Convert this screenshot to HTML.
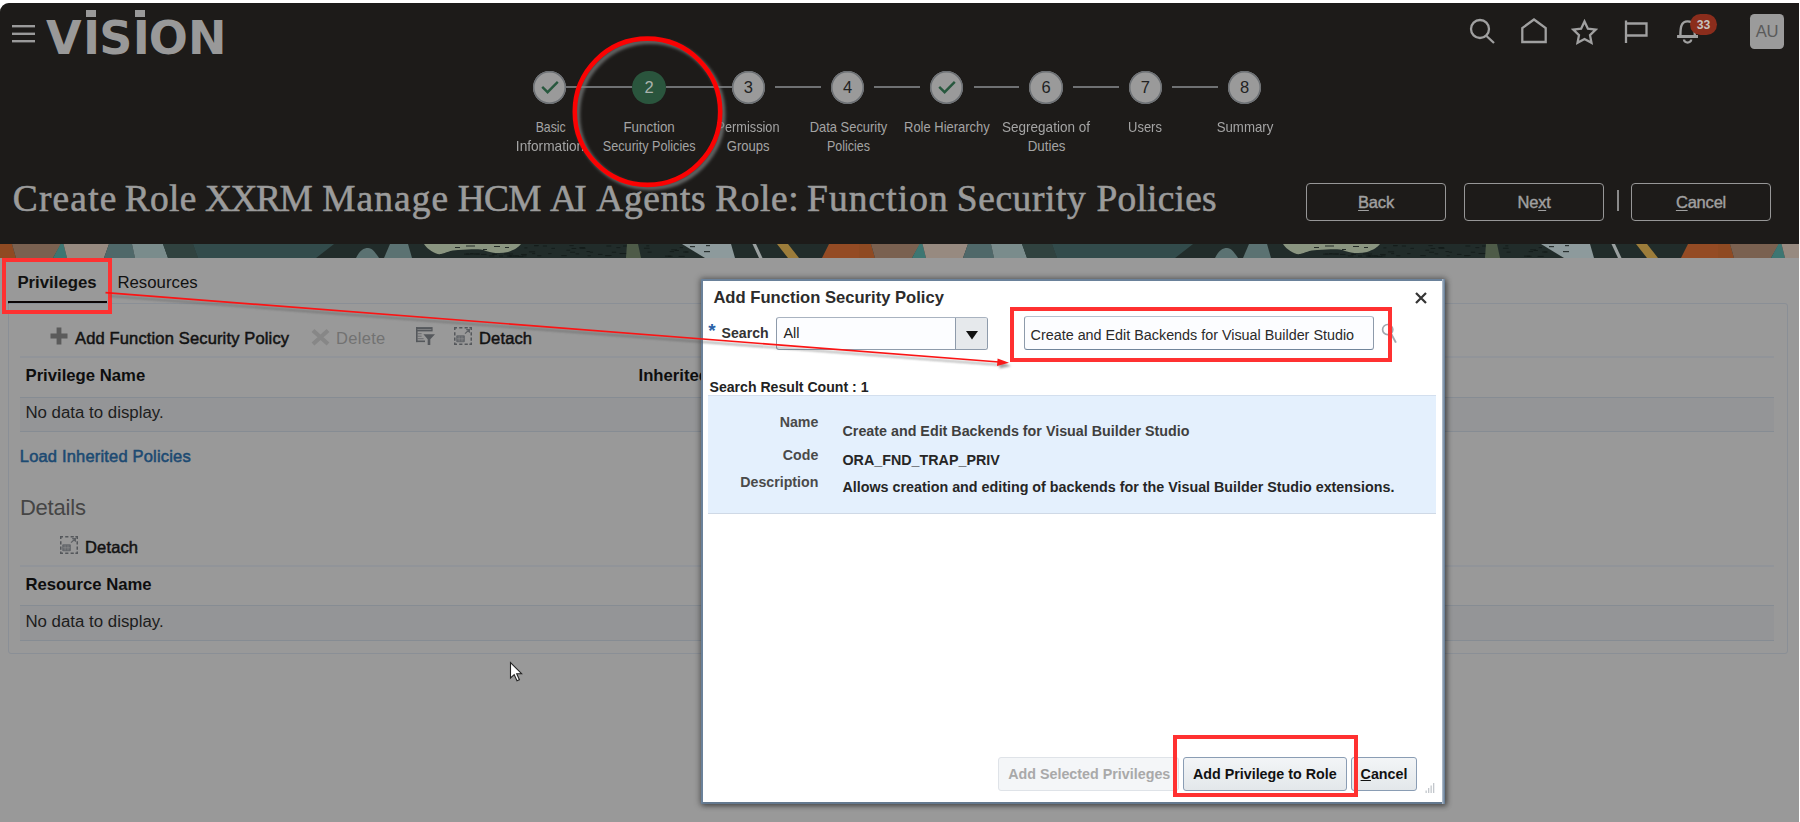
<!DOCTYPE html>
<html lang="en">
<head>
<meta charset="utf-8">
<title>Create Role: Function Security Policies</title>
<style>
*{box-sizing:border-box;margin:0;padding:0}
html,body{width:1800px;height:822px;overflow:hidden;background:#fff}
body{font-family:"Liberation Sans",Arial,sans-serif;color:#111;position:relative}
.abs{position:absolute}
.nw{white-space:nowrap}
#page{position:absolute;left:0;top:3px;width:1799px;height:819px;background:#999;border-top-left-radius:9px;overflow:hidden}
#hdr{position:absolute;left:0;top:0;width:1799px;height:241px;background:#1d1b19}
#band{position:absolute;left:0;top:241px;width:1799px;height:14px}
/* header */
.logo{position:absolute;left:46px;top:7px;font-family:"DejaVu Sans","Liberation Sans",sans-serif;font-weight:bold;font-size:46px;line-height:56px;color:#999;letter-spacing:-1px}
.step{position:absolute;top:68.1px;width:33.4px;height:33.4px;border-radius:50%;background:#9a9a9a;box-shadow:inset 0 0 0 1.5px #6c7074;color:#222;font-size:16.5px;line-height:33.6px;text-align:center}
.step.cur{background:#2a553d;box-shadow:none;color:#abb3ae}
.sline{position:absolute;top:82.8px;height:2px;background:#6f7173}
.slab{position:absolute;top:115.3px;width:140px;text-align:center;font-size:14.3px;line-height:18.7px;color:#a4a4a4;white-space:nowrap}
.slab span{display:block;transform-origin:50% 50%}
.ptitle{position:absolute;left:0;top:171px;width:1300px;height:50px;font-family:"Liberation Serif",Georgia,serif;font-size:37.4px;line-height:50px;color:#9b9b9b;white-space:nowrap;-webkit-text-stroke:0.6px #9b9b9b}
.ptitle span{position:absolute;top:0}
.hbtn{position:absolute;top:180px;width:140px;height:38px;border:1px solid #979797;border-radius:4px;color:#a0a0a0;font-size:16.5px;line-height:37px;text-align:center;font-weight:normal;letter-spacing:-.2px;-webkit-text-stroke:.4px #a0a0a0}
.hbtn u{text-decoration-thickness:1px;text-underline-offset:2px}
/* body */
.tab{position:absolute;top:269px;font-size:16.8px;line-height:22px;color:#111}
.hl{position:absolute;height:1px;background:#868c93}
.tbtxt{position:absolute;font-size:16.5px;line-height:22px;font-weight:normal;color:#121212;white-space:nowrap;letter-spacing:.15px;-webkit-text-stroke:.5px #121212}
.th{position:absolute;font-size:16.7px;margin-left:-.5px;line-height:22px;font-weight:bold;color:#0e0e0e;white-space:nowrap}
.nd{position:absolute;font-size:16.85px;margin-left:-.6px;line-height:22px;color:#1d1d1d;white-space:nowrap}
.ndrow{position:absolute;left:20px;width:1754px;height:34px;background:#949597}
/* dialog */
#dlg{position:absolute;left:701px;top:276px;width:744px;height:525px;background:#fff;border-style:solid;border-color:#6a819a #8d9db1 #64798f #6a819a;border-width:2px 3px 2px 2px;box-shadow:0 0 6px 1px rgba(0,0,0,.38),2px 2px 5px rgba(0,0,0,.3)}
.dtitle{position:absolute;left:10.4px;top:8px;font-size:16.6px;font-weight:bold;line-height:22px;color:#2c2c2c;white-space:nowrap}
.lbl{position:absolute;font-size:14.2px;font-weight:bold;color:#4a4a4a;white-space:nowrap;line-height:18px}
.val{position:absolute;left:139.5px;font-size:14.3px;font-weight:bold;color:#333;white-space:nowrap;line-height:18px}
.dbtn{position:absolute;top:478px;height:34px;border:1px solid #8a9db4;border-radius:3px;background:linear-gradient(#f3f5f7,#e3e7ea);font-size:14.3px;font-weight:bold;color:#111;line-height:32.5px;text-align:center;white-space:nowrap}
.dbtn.dis{color:#a9a9a9;border-color:#dfe3e8;background:#f4f6f8}
.red{position:absolute;border:4px solid #ff3131}
</style>
</head>
<body>
<div id="page">

  <div id="hdr">
    <!-- hamburger -->
    <svg class="abs" style="left:11px;top:21.4px" width="26" height="20" viewBox="0 0 26 20"><g fill="#9a9a9a"><rect x="1" y="1" width="23" height="2.4"/><rect x="1" y="8.6" width="23" height="2.4"/><rect x="1" y="16" width="23" height="2.4"/></g></svg>
    <div class="logo">V<span style="margin-left:2.5px">I</span>S<span style="margin-left:1.3px">I</span>O<span style="margin-left:1px">N</span><i class="abs" style="left:39.5px;top:0px;width:10.6px;height:6.5px;background:#999"></i><i class="abs" style="left:88.6px;top:0px;width:10.2px;height:6.5px;background:#999"></i></div>
    <!-- top-right icons -->
    <svg class="abs" style="left:1460px;top:2px" width="340" height="55" viewBox="1460 5 340 55" fill="none" stroke="#a0a0a0" stroke-width="2.3">
      <circle cx="1480" cy="29" r="9"/><path d="M1486.5 36 L1494 43" />
      <path d="M1522.3 42 V28 L1534 19.5 L1545.7 28 V42 Z"/>
      <path d="M1584.5 21.5 l3.4 7.2 7.8 1 -5.7 5.4 1.5 7.7 -7 -3.8 -7 3.8 1.5 -7.7 -5.7 -5.4 7.8 -1z" stroke-linejoin="miter"/>
      <path d="M1626 20.5 V43 M1626 23.5 H1646.5 V35.5 H1626"/>
      <path d="M1677.2 36.5 H1698 M1680.4 35.5 C1680.4 28 1680.9 21.4 1687.6 21.4 C1694.3 21.4 1694.8 28 1694.8 35.5" stroke-width="2.4"/><path d="M1677.2 36.6 H1698" stroke-width="3"/><path d="M1684 39.6 a3.6 3 0 0 0 7.2 0"/>
    </svg>
    <div class="abs" style="left:1690px;top:11px;width:27px;height:21px;border-radius:10.5px;background:#8b2d1c;color:#c6c1bf;font-size:12.2px;font-weight:bold;line-height:22.6px;text-align:center">33</div>
    <div class="abs" style="left:1750px;top:11px;width:34px;height:35px;border-radius:4.5px;background:#9b9b9b;color:#5a5a5a;font-size:16.6px;line-height:35px;text-align:center;letter-spacing:-0.3px">AU</div>
    <!-- stepper lines -->
    <div class="sline" style="left:566.4px;width:66.0px"></div>
    <div class="sline" style="left:665.6px;width:66.0px"></div>
    <div class="sline" style="left:775.0px;width:45.8px"></div>
    <div class="sline" style="left:874.2px;width:45.8px"></div>
    <div class="sline" style="left:973.5px;width:45.8px"></div>
    <div class="sline" style="left:1072.8px;width:45.8px"></div>
    <div class="sline" style="left:1172.0px;width:45.8px"></div>
    <!-- steps -->
    <div class="step" style="left:533.10px"><svg width="33" height="33" viewBox="0 0 33 33" style="display:block"><path d="M9.2 15.8 L14.6 21.2 L24.8 10.8" fill="none" stroke="#28583e" stroke-width="2.4"/></svg></div>
    <div class="step cur" style="left:632.35px">2</div>
    <div class="step" style="left:731.60px">3</div>
    <div class="step" style="left:830.85px">4</div>
    <div class="step" style="left:930.10px"><svg width="33" height="33" viewBox="0 0 33 33" style="display:block"><path d="M9.2 15.8 L14.6 21.2 L24.8 10.8" fill="none" stroke="#28583e" stroke-width="2.4"/></svg></div>
    <div class="step" style="left:1029.35px">6</div>
    <div class="step" style="left:1128.60px">7</div>
    <div class="step" style="left:1227.85px">8</div>
    <!-- labels -->
    <div class="slab" style="left:479.80px"><span style="transform:translateX(0.7px) scaleX(0.861)">Basic</span><span style="transform:translateX(0.0px) scaleX(0.955)">Information</span></div>
    <div class="slab" style="left:579.05px"><span style="transform:translateX(0.1px) scaleX(0.937)">Function</span><span style="transform:translateX(0.2px) scaleX(0.884)">Security Policies</span></div>
    <div class="slab" style="left:678.30px"><span style="transform:translateX(0.0px) scaleX(0.891)">Permission</span><span style="transform:translateX(0.2px) scaleX(0.912)">Groups</span></div>
    <div class="slab" style="left:777.55px"><span style="transform:translateX(0.5px) scaleX(0.902)">Data Security</span><span style="transform:translateX(0.4px) scaleX(0.873)">Policies</span></div>
    <div class="slab" style="left:876.80px"><span style="transform:translateX(-0.1px) scaleX(0.906)">Role Hierarchy</span></div>
    <div class="slab" style="left:976.05px"><span style="transform:translateX(0.0px) scaleX(0.944)">Segregation of</span><span style="transform:translateX(0.6px) scaleX(0.931)">Duties</span></div>
    <div class="slab" style="left:1075.30px"><span style="transform:translateX(0.0px) scaleX(0.906)">Users</span></div>
    <div class="slab" style="left:1174.55px"><span style="transform:translateX(0.0px) scaleX(0.926)">Summary</span></div>
    <div class="ptitle"><span style="left:12.75px;letter-spacing:1.206px">Create</span> <span style="left:124.75px;letter-spacing:0.326px">Role</span> <span style="left:205px;letter-spacing:-1.481px">XXRM</span> <span style="left:322.25px;letter-spacing:1.084px">Manage</span> <span style="left:457.75px;letter-spacing:-0.721px">HCM</span> <span style="left:550px;letter-spacing:-2.752px">AI</span> <span style="left:596.25px;letter-spacing:0.675px">Agents</span> <span style="left:715.25px;letter-spacing:0.595px">Role:</span> <span style="left:807px;letter-spacing:1.107px">Function</span> <span style="left:956.75px;letter-spacing:0.62px">Security</span> <span style="left:1096.5px;letter-spacing:0.236px">Policies</span></div>
    <div class="hbtn" style="left:1306px"><u>B</u>ack</div>
    <div class="hbtn" style="left:1464px">Ne<u>x</u>t</div>
    <div class="abs" style="left:1617px;top:187px;width:2px;height:21px;background:#8a8a8a"></div>
    <div class="hbtn" style="left:1631px"><u>C</u>ancel</div>
    <!-- red circle annotation -->
    <svg class="abs" style="left:560px;top:25px;overflow:visible" width="180" height="170" viewBox="560 28 180 170">
      <defs><filter id="sh" x="-20%" y="-20%" width="140%" height="140%"><feGaussianBlur stdDeviation="1.6"/></filter></defs>
      <ellipse cx="650.3" cy="114.6" rx="72.7" ry="73.1" fill="none" stroke="#7a7d7d" stroke-opacity=".72" stroke-width="5" filter="url(#sh)"/>
      <ellipse cx="647.5" cy="111.75" rx="72.7" ry="73.1" fill="none" stroke="#fb0202" stroke-width="4.6"/>
    </svg>
  </div>
  <svg id="band" width="1799" height="14" viewBox="0 0 1799 14">
    <defs>
      <pattern id="tile" x="0" y="0" width="859" height="14" patternUnits="userSpaceOnUse">
        <rect width="859" height="14" fill="#212c2a"/>
        <path d="M0 0H12L16 14H0Z" fill="#8f4a22"/>
        <path d="M12 0H61L53 14H16Z" fill="#7a6150"/>
        <path d="M60.500 0H63.500L67 14H53Z" fill="#3d7672"/>
        <path d="M63.500 0H109L104 14H67Z" fill="#978a80"/>
        <path d="M109 0H132L135 14H104Z" fill="#4f6869"/>
        <path d="M132 0H163L168 14H135Z" fill="#7a8c8c"/>
        <path d="M163 0H193L198 14H168Z" fill="#30423f"/>
        <path d="M193 0H334L316 14H198Z" fill="#324b4b"/>
        <path d="M356 14C360 6 364 4 368 4C372 4 375 8 379 14Z" fill="#5b7272"/>
        <path d="M390 0H408L412 14H384Z" fill="#5b7272"/>
        <path d="M424 0C428 6 436 11 441 10C446 9 450 6 458 6C470 6 478 4 486 7C492 9 500 10 508 8C514 6 519 3 521 0Z" fill="#8a9580"/>
        <g fill="#101816" opacity=".85"><rect x="455" y="3" width="5" height="1"/><rect x="466" y="1.5" width="9" height="1"/><rect x="494" y="2" width="6" height="1"/><rect x="505" y="3" width="4" height="1"/><rect x="483" y="5" width="4" height="1"/><rect x="524.3" y="3.4" width="3.2" height="1"/><rect x="646.2" y="1.4" width="3.2" height="1"/><rect x="569.3" y="1.2" width="4.5" height="1"/><rect x="504.0" y="9.4" width="5.9" height="1"/><rect x="475.3" y="9.5" width="5.0" height="1"/><rect x="586.4" y="7.1" width="3.8" height="1"/><rect x="581.4" y="3.3" width="3.5" height="1"/><rect x="473.9" y="9.5" width="5.4" height="1"/><rect x="587.5" y="11.3" width="3.3" height="1"/><rect x="619.5" y="9.1" width="3.7" height="1"/><rect x="611.7" y="7.7" width="4.6" height="1"/><rect x="671.2" y="5.3" width="5.8" height="1"/><rect x="616.3" y="3.2" width="4.1" height="1"/><rect x="566.3" y="5.7" width="4.0" height="1"/><rect x="528.8" y="7.4" width="6.4" height="1"/><rect x="464.0" y="9.6" width="6.1" height="1"/><rect x="521.9" y="11.4" width="4.7" height="1"/><rect x="561.2" y="11.2" width="5.6" height="1"/><rect x="520.9" y="9.9" width="5.9" height="1"/><rect x="514.7" y="11.5" width="4.2" height="1"/><rect x="532.1" y="9.2" width="3.2" height="1"/><rect x="669.6" y="7.2" width="4.6" height="1"/><rect x="579.6" y="3.8" width="6.0" height="1"/><rect x="513.2" y="11.5" width="5.4" height="1"/><rect x="679.6" y="3.2" width="3.5" height="1"/><rect x="606.3" y="1.5" width="5.1" height="1"/><rect x="509.4" y="11.5" width="4.9" height="1"/><rect x="678.5" y="11.8" width="6.3" height="1"/><rect x="605.5" y="11.1" width="6.1" height="1"/><rect x="542.7" y="1.5" width="4.4" height="1"/><rect x="491.7" y="9.5" width="3.4" height="1"/><rect x="470.1" y="9.2" width="3.4" height="1"/><rect x="534.1" y="1.2" width="3.7" height="1"/><rect x="537.2" y="11.3" width="4.2" height="1"/><rect x="534.2" y="1.2" width="4.7" height="1"/><rect x="684.6" y="7.5" width="3.3" height="1"/><rect x="470.0" y="9.5" width="4.7" height="1"/><rect x="571.5" y="3.9" width="4.8" height="1"/><rect x="480.9" y="9.8" width="5.7" height="1"/><rect x="518.0" y="11.8" width="5.4" height="1"/><rect x="509.0" y="9.5" width="4.2" height="1"/><rect x="575.5" y="9.4" width="3.8" height="1"/><rect x="643.8" y="3.7" width="5.9" height="1"/><rect x="492.4" y="9.9" width="4.6" height="1"/><rect x="674.6" y="5.9" width="4.3" height="1"/><rect x="499.0" y="11.5" width="4.2" height="1"/><rect x="597.9" y="9.8" width="4.7" height="1"/><rect x="605.0" y="11.2" width="5.3" height="1"/><rect x="667.9" y="11.7" width="4.7" height="1"/><rect x="488.7" y="11.4" width="5.8" height="1"/><rect x="683.1" y="7.5" width="5.6" height="1"/><rect x="465.8" y="9.5" width="3.4" height="1"/><rect x="589.7" y="7.7" width="3.5" height="1"/><rect x="647.5" y="7.6" width="4.2" height="1"/><rect x="579.4" y="3.1" width="5.8" height="1"/><rect x="623.0" y="1.5" width="6.3" height="1"/><rect x="551.3" y="3.8" width="3.7" height="1"/><rect x="506.7" y="11.5" width="5.7" height="1"/><rect x="508.5" y="11.5" width="3.2" height="1"/><rect x="664.9" y="11.6" width="6.2" height="1"/><rect x="548.1" y="9.2" width="3.5" height="1"/><rect x="570.1" y="7.7" width="5.1" height="1"/><rect x="622.7" y="9.1" width="5.4" height="1"/></g>
        <path d="M627 0H638L641 14H626Z" fill="#4e5b48"/>
        <path d="M682 0H731L735 14H705Z" fill="#8d9a9c"/>
        <g fill="#2a3231"><rect x="690" y="2" width="5" height="1.200"/><rect x="706" y="1" width="4" height="1.200"/><rect x="704" y="7" width="6" height="1.200"/></g>
        <path d="M752.500 0H756L762.500 14H759Z" fill="#9aa0a0"/>
        <path d="M777 0H788L799 14H788Z" fill="#9c7c3a"/>
        <path d="M829 0H859V14H822Z" fill="#944b24"/>
      </pattern>
    </defs>
    <rect width="1799" height="14" fill="url(#tile)"/>
  </svg>

  <!-- tabs -->
  <div class="tab" style="left:17.4px;font-weight:bold">Privileges</div>
  <div class="tab" style="left:117.4px">Resources</div>
  <div class="abs" style="left:7.7px;top:298.1px;width:99.1px;height:2.8px;background:#0c0606"></div>
  <!-- panel -->
  <div class="abs" style="left:8px;top:300px;width:1780px;height:351px;border:1px solid #8a8f96;border-radius:0 3px 3px 3px"></div>
  <!-- toolbar -->
  <svg class="abs" style="left:50px;top:324.4px" width="18" height="18" viewBox="0 0 18 18"><path d="M6.6 0.5h4.8v6.1h6.1v4.8h-6.1v6.1H6.6v-6.1H0.5V6.6h6.1z" fill="#5b5b5b"/></svg>
  <div class="tbtxt" style="left:75px;top:324px">Add Function Security Policy</div>
  <svg class="abs" style="left:311px;top:325px" width="19" height="18" viewBox="0 0 19 18"><path d="M2 2.5 L17 16 M17 2.5 L2 16" stroke="#878787" stroke-width="4.2" fill="none"/></svg>
  <div class="tbtxt" style="left:336px;top:324px;color:#727272;letter-spacing:.3px;-webkit-text-stroke:0">Delete</div>
  <svg class="abs" style="left:416px;top:324px" width="20" height="19" viewBox="0 0 20 19"><g fill="#55585c"><rect x="0" y="0.1" width="16.6" height="4.3"/><rect x="0" y="0.1" width="1.6" height="15"/><rect x="0" y="13.5" width="9" height="1.6"/><rect x="1.6" y="6.2" width="4" height="1" opacity=".7"/><rect x="1.6" y="8.7" width="4" height="1" opacity=".7"/><rect x="1.6" y="11.2" width="6" height="1" opacity=".7"/><path d="M7.4 7.2 H19 L14.3 12.2 V17.9 H11.7 V12.2 Z"/></g><rect x="1.4" y="2.1" width="14" height="0.8" fill="#999" opacity=".75"/></svg>
  <svg class="abs" style="left:453.9px;top:324px" width="19" height="19" viewBox="0 0 19 19"><path d="M0 .75H3M0 17.25H3M.75 0V3M17.25 0V3M5.2 .75H8.4M5.2 17.25H8.4M.75 5.2V8.4M17.25 5.2V8.4M10.6 .75H13.8M10.6 17.25H13.8M.75 10.6V13.8M17.25 10.6V13.8M15.4 .75H18M15.4 17.25H18M.75 15.4V18M17.25 15.4V18" fill="none" stroke="#54575b" stroke-width="1.5"/><rect x="2.2" y="8.3" width="8.7" height="6.9" rx="1" fill="#65686c"/><path d="M5.1 9.3V14.4M8 9.3V14.4M3 11.8H10.2" stroke="#999" stroke-width=".7" opacity=".7" fill="none"/><path d="M11 6.6 L15 3 M12.2 2.6 H15.4 V5.8" stroke="#5d6064" stroke-width="1.2" fill="none"/></svg>
  <div class="tbtxt" style="left:479px;top:324px">Detach</div>
  <div class="hl" style="left:20px;top:353px;width:1754px;height:2px;background:#919499"></div>
  <div class="th" style="left:26px;top:362px">Privilege Name</div>
  <div class="th" style="left:639px;top:362px">Inherited</div>
  <div class="hl" style="left:20px;top:394px;width:1754px"></div>
  <div class="ndrow" style="top:395px;height:33px"></div>
  <div class="nd" style="left:26px;top:399px">No data to display.</div>
  <div class="hl" style="left:20px;top:428px;width:1754px"></div>
  <div class="abs nw" style="left:19.8px;top:442px;font-size:16.5px;line-height:22px;color:#1c4a72;letter-spacing:.18px;-webkit-text-stroke:.55px #1c4a72">Load Inherited Policies</div>
  <div class="abs nw" style="left:19.9px;top:489.6px;font-size:22px;line-height:30px;color:#454545;letter-spacing:-.2px">Details</div>
  <svg class="abs" style="left:60.1px;top:533px" width="19" height="19" viewBox="0 0 19 19"><path d="M0 .75H3M0 17.25H3M.75 0V3M17.25 0V3M5.2 .75H8.4M5.2 17.25H8.4M.75 5.2V8.4M17.25 5.2V8.4M10.6 .75H13.8M10.6 17.25H13.8M.75 10.6V13.8M17.25 10.6V13.8M15.4 .75H18M15.4 17.25H18M.75 15.4V18M17.25 15.4V18" fill="none" stroke="#54575b" stroke-width="1.5"/><rect x="2.2" y="8.3" width="8.7" height="6.9" rx="1" fill="#65686c"/><path d="M5.1 9.3V14.4M8 9.3V14.4M3 11.8H10.2" stroke="#999" stroke-width=".7" opacity=".7" fill="none"/><path d="M11 6.6 L15 3 M12.2 2.6 H15.4 V5.8" stroke="#5d6064" stroke-width="1.2" fill="none"/></svg>
  <div class="tbtxt" style="left:85px;top:533px">Detach</div>
  <div class="hl" style="left:20px;top:562px;width:1754px;height:2px;background:#919499"></div>
  <div class="th" style="left:26px;top:571px">Resource Name</div>
  <div class="hl" style="left:20px;top:602px;width:1754px"></div>
  <div class="ndrow" style="top:603px"></div>
  <div class="nd" style="left:26px;top:608px">No data to display.</div>
  <div class="hl" style="left:20px;top:637px;width:1754px"></div>
  <!-- mouse cursor -->
  <svg class="abs" style="left:508.6px;top:658.3px" width="16" height="22" viewBox="0 0 16 22"><path d="M1.5 1.5 V17 L5.2 13.6 L8 19.8 L10.4 18.7 L7.7 12.7 H12.6 Z" fill="#fff" stroke="#222" stroke-width="1.1"/></svg>

  <!-- dialog -->
  <div id="dlg"><div class="abs" style="right:-3px;top:-2px;width:3px;height:525px;background:linear-gradient(to right,#b9c4d1,#7389a1 70%,#667d96)"></div><div class="abs" style="left:0;top:-2px;width:0;height:0">
    <div class="dtitle">Add Function Security Policy</div>
    <svg class="abs" style="left:711.2px;top:12.4px" width="14" height="14" viewBox="0 0 14 14"><path d="M2 2 L12 12 M12 2 L2 12" stroke="#353535" stroke-width="2.25" fill="none"/></svg>
    <div class="abs" style="left:5.2px;top:41.1px;font-size:19px;line-height:22px;font-weight:bold;color:#2a63a8">*</div>
    <div class="lbl" style="left:19px;top:45.2px;font-size:14.1px;color:#333;left:18.6px">Search</div>
    <div class="abs" style="left:73px;top:38px;width:212px;height:33px;border:1px solid #8e9bab;border-radius:3px;background:#fcfdff;border-top-color:#a9b3c0">
      <div class="abs nw" style="left:6.4px;top:6.4px;font-size:14.4px;line-height:18px;color:#222">All</div>
      <div class="abs" style="left:178px;top:0;width:32px;height:31px;border-left:1px solid #8e9bab;background:#e6e9ec;border-radius:0 2px 2px 0"></div>
      <svg class="abs" style="left:189px;top:12.6px" width="12" height="9" viewBox="0 0 12 9"><path d="M0 0 H12 L6 8.5 Z" fill="#111"/></svg>
    </div>
    <div class="abs" style="left:321px;top:37px;width:349.6px;height:34px;border:1px solid #8e9bab;border-top-color:#b4c0ce;border-bottom-color:#70859b;border-radius:3px;background:#fcfdff">
      <div class="abs nw" style="left:5.6px;top:8.5px;font-size:14.35px;line-height:18px;color:#2a2a2a">Create and Edit Backends for Visual Builder Studio</div>
    </div>
    <svg class="abs" style="left:676px;top:42px" width="20" height="24" viewBox="0 0 20 24"><circle cx="8.7" cy="8.6" r="5.1" fill="none" stroke="#a2a7ae" stroke-width="1.7"/><path d="M12 12.4 L16.9 21.6" stroke="#a2a7ae" stroke-width="2" fill="none"/></svg>
    <div class="red" style="left:306.8px;top:27.5px;width:382px;height:55.2px"></div>
    <div class="lbl" style="left:6.5px;top:98.5px;color:#222;font-size:14.1px">Search Result Count : 1</div>
    <div class="abs" style="left:5px;top:116px;width:728px;height:119px;background:#e4f0fd;border-top:1px solid #d3dfee;border-bottom:1px solid #cfd9e6"></div>
    <div class="lbl" style="left:20px;top:134px;width:95.3px;text-align:right">Name</div>
    <div class="lbl" style="left:20px;top:167.3px;width:95.3px;text-align:right">Code</div>
    <div class="lbl" style="left:20px;top:194px;width:95.3px;text-align:right">Description</div>
    <div class="val" style="top:142.6px;color:#3f3f3f">Create and Edit Backends for Visual Builder Studio</div>
    <div class="val" style="top:172px;color:#262626">ORA_FND_TRAP_PRIV</div>
    <div class="val" style="top:199.4px;color:#262626">Allows creation and editing of backends for the Visual Builder Studio extensions.</div>
    <div class="dbtn dis" style="left:294.8px;width:181.6px;text-align:left;padding-left:9.4px">Add Selected Privileges</div>
    <div class="dbtn" style="left:479.8px;width:164px">Add Privilege to Role</div>
    <div class="dbtn" style="left:647.8px;width:66.5px"><u>C</u>ancel</div>
    <div class="red" style="left:470.3px;top:456.3px;width:184.8px;height:62.2px"></div>
    <svg class="abs" style="left:720px;top:503px" width="12" height="12" viewBox="0 0 12 12"><g fill="#c3c7cc"><rect x="10" y="1" width="1.3" height="10"/><rect x="7.5" y="3.5" width="1.3" height="7.5"/><rect x="5" y="6" width="1.3" height="5"/><rect x="2.5" y="8.5" width="1.3" height="2.5"/></g></svg>
  </div></div>

  <!-- red tab highlight + arrow -->
  <div class="red" style="left:2px;top:255px;width:110px;height:56px;border-width:4px"></div>
  <svg class="abs" style="left:0;top:0;pointer-events:none" width="1798" height="819" viewBox="0 3 1798 819">
    <defs><filter id="sh2" x="-5%" y="-50%" width="110%" height="200%"><feGaussianBlur stdDeviation="1"/></filter></defs>
    <g filter="url(#sh2)" opacity=".55"><path d="M110 296 L1001 365" stroke="#555" stroke-width="1.6"/><path d="M1011 366 L1000 361.5 L999.5 368.5 Z" fill="#555"/></g>
    <path d="M105.500 292.600 L999 362" stroke="#fb1414" stroke-width="1.7"/>
    <path d="M1009 362.7 L997.6 358.6 L997 366 Z" fill="#f81a1a"/>
  </svg>
</div>
</body>
</html>
